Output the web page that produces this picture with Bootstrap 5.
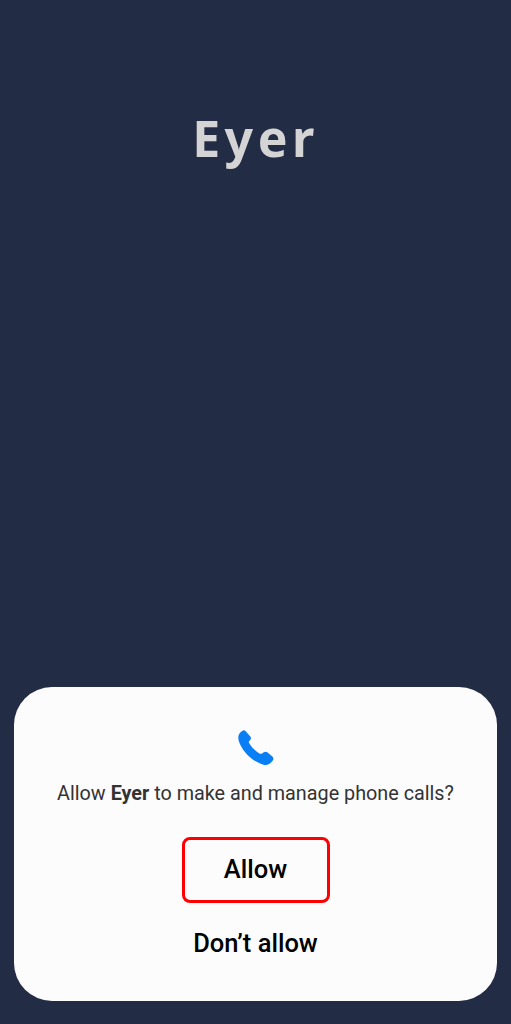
<!DOCTYPE html>
<html lang="en">
<head>
<meta charset="utf-8">
<title>Eyer</title>
<link href="https://cdn.jsdelivr.net/npm/bootstrap@5.3.0/dist/css/bootstrap.min.css" rel="stylesheet">
<style>
html, body { height: 100%; }
body { background: #232c45; font-family: Roboto, "Liberation Sans", sans-serif; }
.screen { height: 1024px; padding: 107px 14px 23px; }
.brand { font-family: "Noto Sans", "Open Sans", sans-serif; font-weight: 700; font-size: 50px; line-height: 62px; letter-spacing: 4.5px; color: #d4d4d4; }
.sheet { background: #fcfcfc; border-radius: 38px; height: 314px; padding-top: 43px; }
.phone-ico { width: 36px; height: 36px; display: block; fill: #0a7ff5; }
.ask { font-size: 19.8px; line-height: 26px; color: #333; margin: 15px 0 0; }
.ask b { font-weight: 700; }
.allow-box { width: 148px; height: 66px; border: 3px solid #f00; border-radius: 8px; margin-top: 30px; color: #000; font-size: 25.5px; font-weight: 500; padding: 0 0 2px; background: transparent; }
.deny-btn { color: #000; font-size: 25.5px; font-weight: 500; padding: 0; margin-top: 17px; line-height: 46px; border: 0; background: transparent; }
</style>
</head>
<body>
<div class="screen d-flex flex-column justify-content-between">
  <div class="brand text-center">Eyer</div>
  <div class="sheet d-flex flex-column align-items-center">
    <svg class="phone-ico" viewBox="0 0 36 36" aria-hidden="true"><path d="M2.5 2.2 L4.2 .9 C5.4 0 6.8 .2 7.7 1.2 L12.3 6.6 C13.2 7.7 13.1 9 12.2 10 L11 11.4 C10.6 12 10.9 12.9 11.4 13.6 C13.6 17.2 17.3 21.2 21.4 23.4 C22.4 23.9 23.2 24 24 23.4 L25.8 22.2 C26.9 21.4 28.2 21.5 29.3 22.3 L34.3 26.4 C35.6 27.5 35.8 29.2 34.8 30.5 L33 32.6 C31 34.9 28.4 35.5 25.4 34.7 C14.5 31.6 4.2 21.4 .9 11.2 C-.3 7.8 .3 4.4 2.5 2.2 Z"/></svg>
    <p class="ask text-center">Allow <b>Eyer</b> to make and manage phone calls?</p>
    <button type="button" class="btn allow-box">Allow</button>
    <button type="button" class="btn deny-btn">Don’t allow</button>
  </div>
</div>
<script src="https://cdn.jsdelivr.net/npm/bootstrap@5.3.0/dist/js/bootstrap.bundle.min.js"></script>
</body>
</html>
